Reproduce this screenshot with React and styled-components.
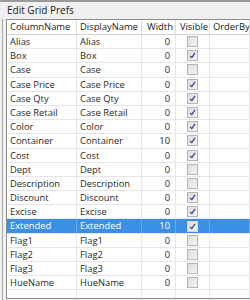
import React from "react";
import styled, { createGlobalStyle } from "styled-components";

const GlobalStyle = createGlobalStyle`
  html, body {
    margin: 0;
    padding: 0;
    background: #f0f0f0;
    font-family: "Open Sans", "Noto Sans", sans-serif;
    overflow: hidden;
  }
`;

const COLS = "70px 65px 34px 34px 1fr";
const ROW_H = 14.2;

// Dialog window
const Window = styled.div`
  width: 250px;
  height: 300px;
  display: flex;
  flex-direction: column;
  background: #f0f0f0;
  border-top: 2px solid #9a9a9a;
  box-sizing: border-box;
`;

const Title = styled.div`
  height: 17px;
  padding-left: 7px;
  font-size: 10px;
  line-height: 17px;
  color: #1a1a1a;
`;

const Frame = styled.div`
  margin-left: 2px;
  padding-left: 3px;
  border-left: 1px solid #a8a8a8;
  flex: 1;
  display: flex;
  flex-direction: column;
`;

const Grid = styled.div`
  height: 278px;
  border: 1px solid #8c8c8c;
  border-right: none;
  background: #fff;
  overflow: hidden;
`;

const HeaderRow = styled.div`
  display: grid;
  grid-template-columns: ${COLS};
  height: 14px;
  border-bottom: 1px solid #d5d5d5;
`;

const HeaderCell = styled.div`
  font-size: 9.4px;
  line-height: 14px;
  padding-left: 3px;
  text-align: ${(p) => (p.$center ? "center" : "left")};
  color: #222;
  border-right: 1px solid #dcdcdc;
  white-space: nowrap;
  overflow: hidden;
`;

const Row = styled.div`
  display: grid;
  grid-template-columns: ${COLS};
  height: ${ROW_H}px;
  box-sizing: border-box;
  border-bottom: 1px solid #e6e6e6;
  background: ${(p) => (p.$selected ? "#3b8fe4" : "#fff")};
  color: ${(p) => (p.$selected ? "#fff" : "#2a2a2a")};
`;

const Cell = styled.div`
  font-size: 9.4px;
  line-height: ${ROW_H - 1}px;
  padding-left: 3px;
  border-right: 1px solid ${(p) => (p.$selected ? "#6aa9ea" : "#e6e6e6")};
  white-space: nowrap;
  overflow: hidden;
`;

const NumCell = styled(Cell)`
  text-align: right;
  padding-left: 0;
  padding-right: 5px;
`;

const BoxCell = styled(Cell)`
  display: flex;
  align-items: center;
  justify-content: center;
  padding-left: 0;
`;

const Check = styled.div`
  width: 9px;
  height: 9px;
  border: 1px solid ${(p) => (p.$selected ? "#d0d8e8" : "#b4b4b4")};
  background: linear-gradient(135deg, #dcdcdc, #f6f6f6);
  display: flex;
  align-items: center;
  justify-content: center;
`;

function Checkbox({ checked, selected }) {
  return (
    <Check $selected={selected}>
      {checked && (
        <svg width="7" height="7" viewBox="0 0 7 7">
          <path d="M1 3.8 L2.8 5.6 L6 0.8" fill="none" stroke="#2b3d8c" strokeWidth="1.2" />
        </svg>
      )}
    </Check>
  );
}

const rows = [
  ["Alias", 0, false],
  ["Box", 0, true],
  ["Case", 0, false],
  ["Case Price", 0, true],
  ["Case Qty", 0, true],
  ["Case Retail", 0, true],
  ["Color", 0, true],
  ["Container", 10, true],
  ["Cost", 0, true],
  ["Dept", 0, false],
  ["Description", 0, false],
  ["Discount", 0, true],
  ["Excise", 0, true],
  ["Extended", 10, true, true],
  ["Flag1", 0, false],
  ["Flag2", 0, false],
  ["Flag3", 0, false],
  ["HueName", 0, false],
  ["", null, null],
];

export default function App() {
  return (
    <>
      <GlobalStyle />
      <Window>
        <Title>Edit Grid Prefs</Title>
        <Frame>
          <Grid>
            <HeaderRow>
              <HeaderCell>ColumnName</HeaderCell>
              <HeaderCell>DisplayName</HeaderCell>
              <HeaderCell $center>Width</HeaderCell>
              <HeaderCell $center>Visible</HeaderCell>
              <HeaderCell>OrderBy</HeaderCell>
            </HeaderRow>
            {rows.map(([name, width, visible, selected], i) => (
              <Row key={i} $selected={selected}>
                <Cell $selected={selected}>{name}</Cell>
                <Cell $selected={selected}>{name}</Cell>
                <NumCell $selected={selected}>{width}</NumCell>
                <BoxCell $selected={selected}>
                  {visible !== null && <Checkbox checked={visible} selected={selected} />}
                </BoxCell>
                <Cell $selected={selected} />
              </Row>
            ))}
          </Grid>
        </Frame>
      </Window>
    </>
  );
}
